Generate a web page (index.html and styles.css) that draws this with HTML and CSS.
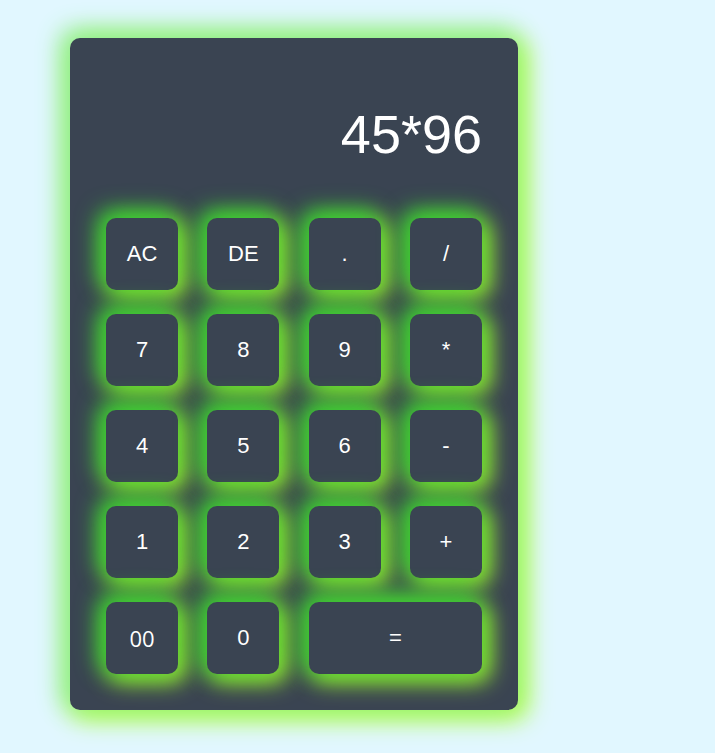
FILE: index.html
```html
<!DOCTYPE html>
<html>
<head>
<meta charset="utf-8">
<link rel="stylesheet" href="styles.css">
</head>
<body>
<div class="calculator">
  <div class="display">45*96</div>
  <div class="keys">
    <button class="key">AC</button>
    <button class="key">DE</button>
    <button class="key">.</button>
    <button class="key">/</button>
    <button class="key">7</button>
    <button class="key">8</button>
    <button class="key">9</button>
    <button class="key">*</button>
    <button class="key">4</button>
    <button class="key">5</button>
    <button class="key">6</button>
    <button class="key">-</button>
    <button class="key">1</button>
    <button class="key">2</button>
    <button class="key">3</button>
    <button class="key">+</button>
    <button class="key key-alt">00</button>
    <button class="key">0</button>
    <button class="key key-wide">=</button>
  </div>
</div>
</body>
</html>
```
FILE: styles.css
```css
html, body {
  margin: 0;
  padding: 0;
}
body {
  background: #e1f7ff;
  min-height: 753px;
  font-family: "Liberation Sans", Arial, sans-serif;
}
.calculator {
  margin: 38px 0 0 70px;
  width: 448px;
  height: 672px;
  box-sizing: border-box;
  padding: 36px;
  background: #3a4452;
  border-radius: 10px;
  box-shadow: -5px -5px 25px 4px #90ee90, 5px 5px 25px 4px #adff2f;
  display: flex;
  flex-direction: column;
  gap: 24px;
}
.display {
  height: 120px;
  display: flex;
  align-items: center;
  justify-content: flex-end;
  color: #ffffff;
  font-size: 54px;
}
.keys {
  display: grid;
  grid-template-columns: repeat(4, 72px);
  grid-auto-rows: 72px;
  justify-content: space-between;
  row-gap: 24px;
}
.key {
  border: none;
  border-radius: 10px;
  background: #3a4452;
  color: #ffffff;
  font-family: "Liberation Sans", Arial, sans-serif;
  font-size: 22px;
  padding: 0;
  box-shadow: -5px -5px 22px 3px #32cd32, 5px 5px 22px 3px #adff2f;
}
.key-alt {
  font-family: "Open Sans", sans-serif;
}
.key-wide {
  grid-column: span 2;
}
```
